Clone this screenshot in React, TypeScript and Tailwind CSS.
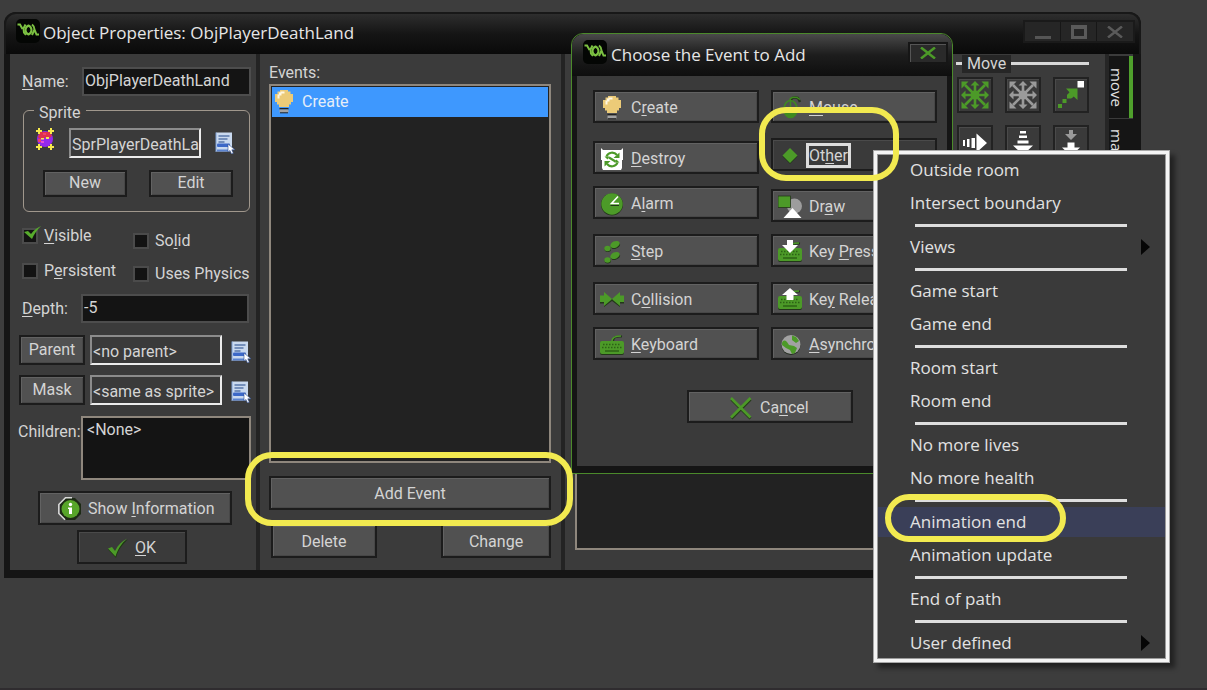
import React from "react";

/* ---------- shared pieces ---------- */

const BUTTON =
  "flex items-center border-2 border-[#1c1c1c] bg-[#515151] pt-0.5 text-[#d4d4d4] shadow-[inset_1px_1px_0_#626262,inset_-1px_-1px_0_#474747]";
const FLAT_BUTTON =
  "flex items-center border-2 border-[#1c1c1c] bg-[#3a3a3a] pt-0.5 text-[#d4d4d4] shadow-[inset_1px_1px_0_#4a4a4a]";
const DARK_INPUT = "h-[29px] border-2 border-[#4d4d4d] bg-[#141414] pb-[3px] pl-px text-[#d4d4d4] outline-none";
const LIGHT_INPUT =
  "h-[30px] w-[132px] border-2 border-t-[#8c8c8c] border-l-[#8c8c8c] border-r-[#ececec] border-b-[#ececec] bg-[#3a3a3a] pt-0.5 pl-px text-[#d4d4d4] outline-none";

/* Text with an underlined access key; without a position nothing is underlined. */
function Accel({ text, at }: { text: string; at?: number }) {
  if (at === undefined) return <span>{text}</span>;
  return (
    <span className="whitespace-pre">
      {text.slice(0, at)}
      <span className="underline underline-offset-2">{text[at]}</span>
      {text.slice(at + 1)}
    </span>
  );
}

function Logo() {
  return (
    <svg viewBox="0 0 24 24" className="size-6 shrink-0" aria-hidden="true">
      <rect width="24" height="24" rx="5" fill="#040604" />
      <g fill="none" stroke="#7cc142" strokeWidth="2">
        <path d="M1.500 5.500H4L6.500 10M9.500 5.500 7.500 9.500 8 13.500 10 16" />
        <path d="M12.500 6.500c2 1 3 2.500 3 4.500s-1 3.500-3 4.500c-2-1-3-2.500-3-4.500s1-3.500 3-4.500z" />
        <path d="M16 5.500c2 1.500 2.500 3 2.500 5l2 5H23M18.500 10.500 16 16" />
      </g>
    </svg>
  );
}

function ListIcon() {
  return (
    <svg viewBox="0 0 20 22" className="h-[22px] w-5" aria-hidden="true">
      <rect x="1" y="0.500" width="16" height="19" fill="#c9d9ef" />
      <path d="M1 20V.5" stroke="#7da0d6" />
      <path d="M3.500 4h11M3.500 7h9M3.500 10h6" stroke="#5877ab" strokeWidth="1.300" />
      <rect x="2" y="11.500" width="13" height="3.500" rx="1" fill="#3c68c8" />
      <path d="M2 18.500h12" stroke="#5b83cf" strokeWidth="2" />
      <path d="M13 12v8l2-1.500 1.500 3.500 1.800-.8-1.500-3.400H20z" fill="#fff" stroke="#2d4f96" strokeWidth=".6" />
    </svg>
  );
}

function SpriteIcon() {
  return (
    <svg viewBox="0 0 20 22" className="h-[22px] w-5" aria-hidden="true">
      <circle cx="10" cy="11" r="8" fill="#9428ee" />
      <path d="M3 9 5 4h10l2 4-2.500 2-3.500-1-3 2-4-.5z" fill="#e0304c" />
      <path d="M3 11h3v3H3zM8 5h3v2H8z" fill="#f0406a" />
      <g fill="#f6e94c">
        <path d="M1 2h2V0h2v2h2v2H5v2H3V4H1zM19 2h-2V0h-2v2h-2v2h2v2h2V4h2zM1 18h2v-2h2v2h2v2H5v2H3v-2H1zM19 18h-2v-2h-2v2h-2v2h2v2h2v-2h2z" />
        <path d="M6 10h3v1.500H6zM11 9h3v2h-3z" />
      </g>
      <path d="M6 14h3" stroke="#ff5ad0" strokeWidth="1.500" />
    </svg>
  );
}

function BulbIcon() {
  return (
    <svg viewBox="0 0 20 24" className="h-6 w-5" aria-hidden="true">
      <path d="M6 0h8v1.500h2.500V4H19v8h-2v2.500h-2V17H5v-2.500H3V12H1V4h2.500V1.500H6z" fill="#eccb78" />
      <path d="M6.500 1.500h4v2h-3v2h-2v3h-2V4.500h1.500v-2h1.500z" fill="#fff8e2" />
      <path d="M5.500 18h9v1.500h-9z" fill="#222" />
      <path d="M5.500 19.500h9v3h-9z" fill="#a3a3a3" />
      <path d="M6 22.800h8" stroke="#222" />
    </svg>
  );
}

function DestroyIcon() {
  return (
    <svg viewBox="0 0 24 24" className="size-6" aria-hidden="true">
      <path d="M1 1l2 2h18l2-2v12h-1v8l-1 2H3l-1-2v-8H1z" fill="#fff" />
      <g fill="none" stroke="#4c9a28" strokeWidth="2.200">
        <path d="M6.500 9.500C8 5 14 4.500 17 8" />
        <path d="M17.500 15.500C16 20 10 20.500 7 17" />
        <path d="M9 10.500l6.500 4" />
      </g>
      <path d="M19.500 5.500v5.500h-6zM4.500 19.500V14h6zM4.500 9.500h5l-2 3zM19.500 15.500h-5l2-3z" fill="#4c9a28" />
    </svg>
  );
}

function AlarmIcon() {
  return (
    <svg viewBox="0 0 24 24" className="size-6" aria-hidden="true">
      <circle cx="12" cy="12.500" r="11" fill="#23361a" />
      <circle cx="12" cy="12" r="10.700" fill="#4c9a28" />
      <path d="M18 4.500 11.500 11.500H19" fill="none" stroke="#fff" strokeWidth="1.600" />
      <path d="M10.500 13.500H19" stroke="#23361a" />
    </svg>
  );
}

function StepIcon() {
  return (
    <svg viewBox="0 0 24 24" className="size-6" aria-hidden="true">
      <g fill="#23361a">
        <ellipse cx="15.500" cy="5.500" rx="4.800" ry="3" transform="rotate(-25 15.500 5.500)" />
        <ellipse cx="7.800" cy="9.300" rx="3.200" ry="2.700" />
        <ellipse cx="15.500" cy="16.500" rx="4.800" ry="3" transform="rotate(-25 15.500 16.500)" />
        <ellipse cx="7.800" cy="20.800" rx="3.200" ry="2.700" />
      </g>
      <g fill="#4c9a28">
        <ellipse cx="15" cy="4.500" rx="5" ry="3.200" transform="rotate(-25 15 4.500)" />
        <ellipse cx="7.500" cy="8.500" rx="3.200" ry="2.700" />
        <ellipse cx="15" cy="15.500" rx="5" ry="3.200" transform="rotate(-25 15 15.500)" />
        <ellipse cx="7.500" cy="20" rx="3.200" ry="2.700" />
      </g>
    </svg>
  );
}

function CollisionIcon() {
  return (
    <svg viewBox="0 0 24 24" className="size-6" aria-hidden="true">
      <path d="M0 8.500h4V5l8 6.500L20 5v3.500h4v7h-4V19l-8-6-8 6v-3.500H0z" fill="#23361a" />
      <path d="M0 7.500h4V4l7 6 1 1 1-1 7-6v3.500h4V14h-4v4l-6.500-5.500L12 11l-1.500 1.500L4 18v-4H0z" fill="#4c9a28" />
    </svg>
  );
}

function KeyboardIcon({ arrow }: { arrow?: "down" | "up" }) {
  return (
    <svg viewBox="0 0 24 24" className="size-6" aria-hidden="true">
      <path d="M13 9c0-5 3-6 9-5.500" fill="none" stroke="#23361a" strokeWidth="2" />
      <path d="M12 8c0-4 3-5 9-5" fill="none" stroke="#4c9a28" strokeWidth="1.500" />
      <rect y="9" width="24" height="13" rx="2" fill="#23361a" />
      <rect y="8" width="24" height="13" rx="2" fill="#4c9a28" />
      <path d="M3 11.500h18M2 14.500h20" stroke="#2d6215" strokeWidth="1.500" strokeDasharray="1.500 1.500" />
      <path d="M5 18h14" stroke="#2d6215" strokeWidth="1.500" />
      {arrow === "down" && <path d="M9 0h6v5h5l-8 8-8-8h5z" fill="#fff" />}
      {arrow === "up" && <path d="M12 0l8 7h-4.500v5h-7V7H4z" fill="#fff" />}
    </svg>
  );
}

function MouseIcon() {
  return (
    <svg viewBox="0 0 24 24" className="size-6" aria-hidden="true">
      <path d="M13 5c0-4 4-4 7-3l2 4" fill="none" stroke="#23361a" strokeWidth="2.500" />
      <path d="M12 4c0-3 4-3 7-2.500l3 2" fill="none" stroke="#3f8a20" strokeWidth="1.500" />
      <ellipse cx="12.500" cy="13" rx="6.500" ry="8.500" fill="none" stroke="#3f8a20" strokeWidth="1.700" />
      <path d="M6 13h13c0 5-3 9-6.500 9S6 18 6 13z" fill="#3f8a20" />
      <path d="M12.500 4v9" stroke="#3f8a20" strokeWidth="1.500" />
    </svg>
  );
}

function OtherIcon() {
  return (
    <svg viewBox="0 0 24 24" className="size-6" aria-hidden="true">
      <path d="M12 5l7.500 7.500-7.500 7.500-7.500-7.500z" fill="#23361a" />
      <path d="M12 4l7.500 7.500L12 19l-7.500-7.500z" fill="#4c9a28" />
    </svg>
  );
}

function DrawIcon() {
  return (
    <svg viewBox="0 0 24 24" className="size-6" aria-hidden="true">
      <circle cx="16.500" cy="11" r="7.500" fill="#9d9d9d" />
      <rect y="1" width="12.500" height="11.500" fill="#4c9a28" stroke="#23361a" strokeWidth=".8" />
      <path d="M14.500 13l9 10h-18z" fill="#fff" />
    </svg>
  );
}

function GlobeIcon() {
  return (
    <svg viewBox="0 0 24 24" className="size-6" aria-hidden="true">
      <circle cx="13" cy="12.500" r="9.500" fill="#252d21" />
      <circle cx="13" cy="11.500" r="9.500" fill="#a2a2a2" />
      <path d="M4 10c1-3 3-3 5-1l2 3 5 1 3 2-2 5-3 1-2-4-4-2-4-3zM14 2.500l4 1.500 3 4-3 2-4-3z" fill="#4c9a28" />
    </svg>
  );
}

function TickIcon() {
  return (
    <svg viewBox="0 0 22 20" className="h-5 w-[22px]" aria-hidden="true">
      <path d="M1 11.500l4-1.500 3 4C11 8 15 4 21 1.500 15 7 11 12 9 20z" fill="#1f3a12" />
      <path d="M1 10.500l4-1.500 3 4C11 7 15 3 20 .5 14 6 11 11 8.500 18.500z" fill="#4c9a28" />
    </svg>
  );
}

function CrossIcon() {
  return (
    <svg viewBox="0 0 24 24" className="size-6" aria-hidden="true">
      <path d="M2.500 3.500l19 19M21.500 3.500l-19 19" stroke="#233a17" strokeWidth="2.800" />
      <path d="M2 2l19.500 19.500M21.500 2L2 21.500" stroke="#4c9a28" strokeWidth="2.600" />
    </svg>
  );
}

function InfoIcon() {
  return (
    <svg viewBox="0 0 24 24" className="size-6" aria-hidden="true">
      <path d="M8 1h9l6 6v10l-6 6H8l-6-6V7z" fill="#1d2a15" />
      <path d="M14 .8H7.500L.8 7.500v9L7 22.800" fill="none" stroke="#d9d9d9" strokeWidth="1.500" />
      <circle cx="12.500" cy="12" r="9" fill="#57a529" />
      <circle cx="12.500" cy="7.500" r="1.700" fill="#fff" />
      <path d="M10 10.500h4V17h-3v-5h-1z" fill="#fff" />
    </svg>
  );
}

/* ---------- action tool icons ---------- */

function EightWay({ color }: { color: string }) {
  return (
    <svg viewBox="0 0 28 28" className="size-7" fill={color} aria-hidden="true">
      <path d="M14 3v22M3 14h22M4 4l20 20M24 4L4 24" stroke={color} strokeWidth="2.600" />
      <path d="M14 0l4.500 4.500h-9zM14 28l4.500-4.500h-9zM0 14l4.500-4.500v9zM28 14l-4.500-4.500v9z" />
      <path d="M.5.500h7L.5 7.500zM27.500.500v7l-7-7zM27.500 27.500h-7l7-7zM.5 27.500v-7l7 7z" />
      <circle cx="14" cy="14" r="4.500" />
    </svg>
  );
}

function PointIcon() {
  return (
    <svg viewBox="0 0 28 28" className="size-7" aria-hidden="true">
      <path d="M20.500 0H27v6.500h-6.500z" fill="#fff" />
      <path d="M9 7.500h11.500V19l-3.800-3.500-2.200 2-4-4 2-2.200z" fill="#4c9a28" />
      <path d="M10 13.500h4v4h-4zM5.500 18h4v4h-4zM1 23h4v4H1z" fill="#4c9a28" />
    </svg>
  );
}

function RightIcon() {
  return (
    <svg viewBox="0 0 28 28" className="size-7" fill="#fff" aria-hidden="true">
      <path d="M2 11h2v6H2zM6 10h2.500v8H6zM10.500 9H14v10h-3.500zM15.500 4.500l10.500 9.500-10.500 9.500z" />
    </svg>
  );
}

function DownIcon() {
  return (
    <svg viewBox="0 0 28 28" className="size-7" fill="#fff" aria-hidden="true">
      <path d="M11 2h6v2.500h-6zM10 6.500h8V9h-8zM8.500 11.500h11v3h-11zM4 16.500h20L14 26z" />
    </svg>
  );
}

function GravityIcon() {
  return (
    <svg viewBox="0 0 28 28" className="size-7" aria-hidden="true">
      <path d="M12 1h4v4h4l-6 6-6-6h4z" fill="#9a9a9a" />
      <path d="M10.500 13.500h7v5H23L14 27l-9-8.500h5.500z" fill="#fff" />
    </svg>
  );
}

/* ---------- object properties window ---------- */

function Check({ text, at, checked }: { text: string; at?: number; checked?: boolean }) {
  return (
    <label className="flex h-[18px] items-center gap-1.5 leading-[18px] whitespace-nowrap">
      <span className="relative size-4">
        <input
          type="checkbox"
          defaultChecked={checked}
          className="peer block size-4 appearance-none border-2 border-[#4b4b4b] bg-[#131313] outline-none"
        />
        <svg
          viewBox="0 0 18 14"
          className="pointer-events-none absolute -top-0.5 left-0.5 hidden h-3.5 w-[18px] peer-checked:block"
          aria-hidden="true"
        >
          <path d="M0 6l4-1 3 3C10 4 13 2 17 0 13 4 10 8 8 13z" fill="#57ab2c" />
        </svg>
      </span>
      <Accel text={text} at={at} />
    </label>
  );
}

function Properties() {
  return (
    <section className="flex w-[250px] shrink-0 flex-col border-r-4 border-[#232323] pt-[13px] pb-1.5">
      <div className="flex items-center pl-3">
        <label htmlFor="name" className="w-[60px]">
          <Accel text="Name:" at={0} />
        </label>
        <input id="name" defaultValue="ObjPlayerDeathLand" className={`${DARK_INPUT} w-[169px]`} />
      </div>

      <fieldset className="mt-[3px] ml-[13px] w-[227px] rounded-md border border-[#a0978c] pb-3.5">
        <legend className="ml-2.5 h-[22px] px-[5px] pt-1.5 leading-4">Sprite</legend>
        <div className="flex items-start gap-3.5 pt-[7px] pl-[11px]">
          <SpriteIcon />
          <input aria-label="Sprite name" defaultValue="SprPlayerDeathLand" className={LIGHT_INPUT} />
          <button aria-label="Choose sprite" className="pt-1">
            <ListIcon />
          </button>
        </div>
        <div className="mt-3 flex gap-[22px] pl-[19px]">
          <button className={`${BUTTON} h-[27px] w-[84px] justify-center pb-1`}>New</button>
          <button className={`${BUTTON} h-[27px] w-[84px] justify-center pb-1`}>Edit</button>
        </div>
      </fieldset>

      <div className="mt-[15px] flex pl-3">
        <div className="flex w-[111px] shrink-0 flex-col gap-[17px]">
          <Check text="Visible" at={0} checked />
          <Check text="Persistent" at={1} />
        </div>
        <div className="flex flex-col gap-[15px] pt-[5px]">
          <Check text="Solid" at={2} />
          <Check text="Uses Physics" />
        </div>
      </div>

      <div className="mt-[11px] flex items-center pl-3">
        <label htmlFor="depth" className="w-[59px]">
          <Accel text="Depth:" at={0} />
        </label>
        <input id="depth" defaultValue="-5" className={`${DARK_INPUT} w-[168px]`} />
      </div>

      <div className="mt-3 flex flex-col gap-2.5 pl-[9px]">
        <div className="flex items-center">
          <button className={`${BUTTON} h-[30px] w-[66px] justify-center pb-0.5`}>Parent</button>
          <input aria-label="Parent object" defaultValue="<no parent>" className={`${LIGHT_INPUT} ml-[5px]`} />
          <button aria-label="Choose parent" className="ml-[9px] pt-1">
            <ListIcon />
          </button>
        </div>
        <div className="flex items-center">
          <button className={`${BUTTON} h-[30px] w-[66px] justify-center pb-0.5`}>Mask</button>
          <input aria-label="Mask sprite" defaultValue="<same as sprite>" className={`${LIGHT_INPUT} ml-[5px]`} />
          <button aria-label="Choose mask" className="ml-[9px] pt-1">
            <ListIcon />
          </button>
        </div>
      </div>

      <div className="mt-[11px] flex pl-2">
        <span id="children" className="w-[63px] pt-1">
          Children:
        </span>
        <ul
          aria-labelledby="children"
          className="h-16 w-[170px] border-2 border-[#8f877d] bg-[#141414] pl-1"
        >
          <li>&lt;None&gt;</li>
        </ul>
      </div>

      <button className={`${BUTTON} mt-[11px] ml-7 h-[34px] w-[194px] gap-1.5 pl-[18px]`}>
        <InfoIcon />
        <Accel text="Show Information" at={5} />
      </button>
      <button className={`${FLAT_BUTTON} mt-[5px] ml-[67px] h-[34px] w-[110px] gap-1.5 pl-7`}>
        <TickIcon />
        <Accel text="OK" at={0} />
      </button>
    </section>
  );
}

function Events() {
  return (
    <section className="flex w-[305px] shrink-0 flex-col border-r-4 border-[#232323] pt-[9px] pr-2.5 pb-3 pl-[9px]">
      <h2 id="events" className="leading-5">
        Events:
      </h2>
      <ul
        role="listbox"
        aria-labelledby="events"
        className="mt-px flex-1 border-2 border-[#8f877d] bg-[#222222] p-px"
      >
        <li role="option" aria-selected="true" className="flex h-[30px] items-center gap-2 bg-[#3e98fe] pl-0.5">
          <BulbIcon />
          <span className="text-[#e6eef8]">Create</span>
        </li>
      </ul>
      <button className={`${BUTTON} mt-[13px] h-[34px] justify-center`}>Add Event</button>
      <div className="mt-3.5 flex justify-between pl-0.5">
        <button className={`${BUTTON} h-[34px] w-[106px] justify-center`}>Delete</button>
        <button className={`${BUTTON} h-[34px] w-[110px] justify-center`}>Change</button>
      </div>
    </section>
  );
}

const TOOLS = [
  { label: "Move fixed", icon: <EightWay color="#4c9a28" /> },
  { label: "Move free", icon: <EightWay color="#9a9a9a" /> },
  { label: "Move towards", icon: <PointIcon /> },
  { label: "Speed horizontal", icon: <RightIcon /> },
  { label: "Speed vertical", icon: <DownIcon /> },
  { label: "Set gravity", icon: <GravityIcon /> },
];

function Actions() {
  return (
    <section className="flex min-w-0 flex-1">
      <div className="flex min-w-0 flex-1 flex-col pt-[30px] pr-3.5 pb-5 pl-2.5">
        <div className="flex-1 border-2 border-[#8f877d] bg-[#222222]" />
      </div>
      <div className="w-[133px] shrink-0">
        <div className="flex h-[18px] items-center">
          <span className="h-[3px] w-1.5 bg-[#d8d8d8]" />
          <h2 className="mt-0.5 bg-[#262626] px-[5px] leading-[18px]">Move</h2>
          <span className="h-[3px] flex-1 bg-[#d8d8d8]" />
        </div>
        <div className="mt-[5px] grid grid-cols-[36px_36px_36px] gap-3 pl-px">
          {TOOLS.map((t) => (
            <button
              key={t.label}
              aria-label={t.label}
              className="flex size-9 items-center justify-center border-2 border-[#222222] bg-[#3a3a3a] shadow-[inset_1px_1px_0_#4a4a4a]"
            >
              {t.icon}
            </button>
          ))}
        </div>
      </div>
      <div className="ml-4 flex w-7 shrink-0 flex-col border-l-4 border-[#262626] pt-0.5 font-['Open_Sans',sans-serif] text-[15px] leading-5">
        <button className="flex h-[62px] items-center justify-center border-r-4 border-[#4fa02c] bg-[#151515] pr-1 text-[#e4e4e4] [writing-mode:vertical-rl]">
          move
        </button>
        <button className="mt-px flex h-[62px] items-center bg-[#151515] pt-2.5 pr-2 text-[#e4e4e4] [writing-mode:vertical-rl]">
          main1
        </button>
      </div>
    </section>
  );
}

function ObjectWindow() {
  return (
    <main className="mt-3 mr-[66px] ml-1 rounded-t-xl bg-[#151515] pr-2 pb-2 pl-1.5">
      <header className="-mr-2 -ml-1.5 flex h-[42px] items-start justify-between rounded-t-xl border-2 border-b-0 border-[#181818] bg-linear-to-b from-[#2e2e2e] via-[#151515] to-[#0a0a0a] pr-1 pl-2.5">
        <div className="flex min-w-0 items-start gap-[3px] pt-[5px]">
          <Logo />
          <h1 className="pt-0.5 font-['Open_Sans',sans-serif] text-[17px] leading-6 whitespace-nowrap text-[#e6e6e6]">
            Object Properties: ObjPlayerDeathLand
          </h1>
        </div>
        <div className="mt-1.5 flex h-[23px] border-2 border-[#1a1a1a] bg-[#262626]">
          <button aria-label="Minimize" className="flex w-9 items-end justify-center border-r border-[#171717] pb-0.5">
            <span className="h-[3px] w-4 bg-[#555]" />
          </button>
          <button aria-label="Maximize" className="flex w-9 items-center justify-center border-r border-[#171717]">
            <span className="h-3.5 w-4 border-3 border-t-4 border-[#5a5a5a]" />
          </button>
          <button aria-label="Close" className="flex w-9 items-center justify-center">
            <svg viewBox="0 0 16 12" className="h-3 w-4" stroke="#5a5a5a" strokeWidth="2.500" aria-hidden="true">
              <path d="M1 .5l14 11M15 .5L1 11.500" />
            </svg>
          </button>
        </div>
      </header>
      <div className="flex bg-[#3b3b3b]">
        <Properties />
        <Events />
        <Actions />
      </div>
    </main>
  );
}

/* ---------- event dialog ---------- */

type EventItem = { text: string; at: number; icon: React.ReactNode; gap: string; focused?: boolean };

const LEFT: EventItem[] = [
  { text: "Create", at: 1, icon: <BulbIcon />, gap: "" },
  { text: "Destroy", at: 0, icon: <DestroyIcon />, gap: "mt-[18px]" },
  { text: "Alarm", at: 1, icon: <AlarmIcon />, gap: "mt-3" },
  { text: "Step", at: 0, icon: <StepIcon />, gap: "mt-[15px]" },
  { text: "Collision", at: 1, icon: <CollisionIcon />, gap: "mt-[15px]" },
  { text: "Keyboard", at: 0, icon: <KeyboardIcon />, gap: "mt-3" },
];

const RIGHT: EventItem[] = [
  { text: "Mouse", at: 0, icon: <MouseIcon />, gap: "" },
  { text: "Other", at: 2, icon: <OtherIcon />, gap: "mt-[15px]", focused: true },
  { text: "Draw", at: 2, icon: <DrawIcon />, gap: "mt-[18px]" },
  { text: "Key Press", at: 4, icon: <KeyboardIcon arrow="down" />, gap: "mt-3" },
  { text: "Key Release", at: 2, icon: <KeyboardIcon arrow="up" />, gap: "mt-[15px]" },
  { text: "Asynchronous", at: 0, icon: <GlobeIcon />, gap: "mt-3" },
];

function EventColumn({ items }: { items: EventItem[] }) {
  return (
    <div className="flex w-[166px] flex-col">
      {items.map((e) => (
        <button
          key={e.text}
          className={`${e.focused ? FLAT_BUTTON : BUTTON} ${e.gap} h-[33px] gap-1 pl-[5px]`}
        >
          <span className="flex w-6 justify-center">{e.icon}</span>
          <span
            className={
              e.focused
                ? "border-3 border-[#dcdcdc] leading-[19px]"
                : "border-3 border-transparent leading-[19px]"
            }
          >
            <Accel text={e.text} at={e.at} />
          </span>
        </button>
      ))}
    </div>
  );
}

function EventDialog() {
  return (
    <div
      role="dialog"
      aria-labelledby="dialog-title"
      className="absolute top-[33px] left-[571px] rounded-t-xl border border-[#4b8a2b] bg-[#151515] px-[5px] pb-[7px]"
    >
      <header className="-mx-[5px] flex h-[42px] items-start justify-between rounded-t-xl bg-linear-to-b from-[#4a4a4a] via-[#1d1d1d] to-[#0e0e0e] pr-1 pl-[11px]">
        <div className="flex items-start gap-1 pt-1.5">
          <Logo />
          <h2
            id="dialog-title"
            className="pt-[3px] font-['Open_Sans',sans-serif] text-[17px] leading-6 whitespace-nowrap text-[#e6e6e6]"
          >
            Choose the Event to Add
          </h2>
        </div>
        <button
          aria-label="Close dialog"
          className="mt-2 flex h-[22px] w-10 items-center justify-center border-2 border-[#161616] bg-[#2a2a2a] shadow-[inset_1px_1px_0_#555]"
        >
          <svg viewBox="0 0 16 12" className="h-3 w-4" stroke="#4c9a28" strokeWidth="2.500" aria-hidden="true">
            <path d="M1 .5l14 11M15 .5L1 11.500" />
          </svg>
        </button>
      </header>
      <div className="bg-[#3a3a3a] pt-3.5 pr-2.5 pb-[43px] pl-4">
        <div className="flex gap-3">
          <EventColumn items={LEFT} />
          <EventColumn items={RIGHT} />
        </div>
        <button className={`${BUTTON} mt-[30px] ml-[94px] h-[33px] w-[166px] gap-[7px] pl-10`}>
          <CrossIcon />
          <Accel text="Cancel" at={2} />
        </button>
      </div>
    </div>
  );
}

/* ---------- pop-up menu ---------- */

type MenuRow = { text: string; submenu?: boolean; active?: boolean };

const MENU: MenuRow[][] = [
  [{ text: "Outside room" }, { text: "Intersect boundary" }],
  [{ text: "Views", submenu: true }],
  [{ text: "Game start" }, { text: "Game end" }],
  [{ text: "Room start" }, { text: "Room end" }],
  [{ text: "No more lives" }, { text: "No more health" }],
  [{ text: "Animation end", active: true }, { text: "Animation update" }],
  [{ text: "End of path" }],
  [{ text: "User defined", submenu: true }],
];

function OtherMenu() {
  return (
    <div
      role="menu"
      aria-label="Other events"
      className="absolute top-[150px] left-[873px] flex w-[297px] flex-col gap-[3px] border border-[#a8a8a8] bg-[#3a3a3a] p-1 font-['Open_Sans',sans-serif] text-[17px] text-[#e2e2e2] shadow-[inset_0_0_0_3px_#f4f4f4,inset_0_0_0_4px_#9a9a9a,5px_5px_5px_rgba(0,0,0,0.45)]"
    >
      {MENU.map((group, i) => (
        <React.Fragment key={group[0].text}>
          {i > 0 && (
            <div role="separator" className="h-2 pt-[3px] pr-[38px] pl-[37px]">
              <div className="h-[3px] bg-[#dedede]" />
            </div>
          )}
          {group.map((row) => (
            <button
              key={row.text}
              role="menuitem"
              className={
                row.active
                  ? "flex h-[30px] items-center justify-between bg-[#3a3f58] pr-[15px] pl-8"
                  : "flex h-[30px] items-center justify-between pr-[15px] pl-8"
              }
            >
              {row.text}
              {row.submenu && (
                <svg viewBox="0 0 9 16" className="h-4 w-[9px]" aria-hidden="true">
                  <path d="M0 0l9 8-9 8z" fill="#060606" />
                </svg>
              )}
            </button>
          ))}
        </React.Fragment>
      ))}
    </div>
  );
}

export default function App() {
  return (
    <div className="relative flow-root min-h-screen overflow-hidden border-b-2 border-[#2f2c2f] bg-[#3d3d3d] font-[Roboto,sans-serif] text-[16px] text-[#d4d4d4]">
      <ObjectWindow />
      <EventDialog />
      <OtherMenu />
      <div className="pointer-events-none absolute top-[452px] left-[245px] h-[74px] w-[328px] rounded-[27px] border-6 border-[#f2ea50]" />
      <div className="pointer-events-none absolute top-[107px] left-[759px] h-[74px] w-[140px] rounded-[27px] border-6 border-[#f2ea50]" />
      <div className="pointer-events-none absolute top-[494px] left-[885px] h-12 w-[181px] rounded-full border-6 border-[#f2ea50]" />
    </div>
  );
}
